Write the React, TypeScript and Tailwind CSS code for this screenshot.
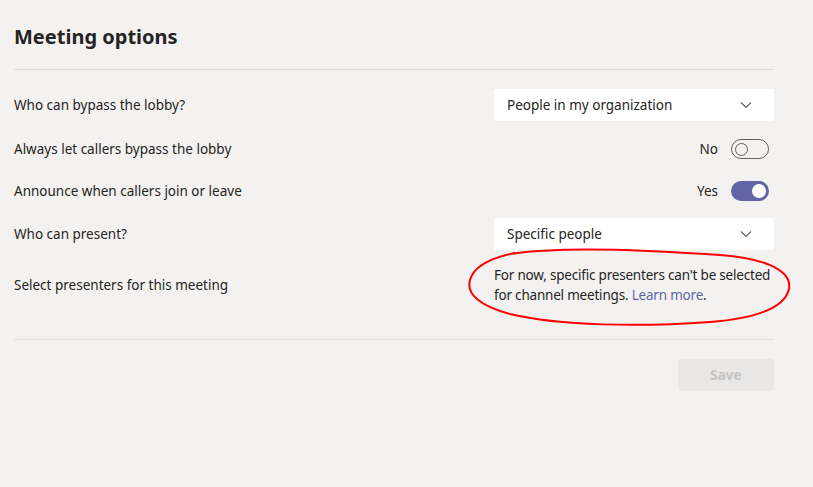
import React from "react";

const font = { fontFamily: '"Noto Sans", "Open Sans", sans-serif' };

function Chevron() {
  return (
    <svg width="12" height="8" viewBox="0 0 12 8" fill="none">
      <path d="M1 1.5 L6 6.5 L11 1.5" stroke="#605e5c" strokeWidth="1.1" />
    </svg>
  );
}

function Dropdown({ value }: { value: string }) {
  return (
    <div className="flex h-8 w-[280px] items-center justify-between rounded-[3px] bg-white pl-[13px] pr-[22px] text-[13.5px] text-[#252423]">
      <span>{value}</span>
      <Chevron />
    </div>
  );
}

function Toggle({ on, label }: { on: boolean; label: string }) {
  return (
    <div className="flex items-center gap-[13px] pr-[5px] text-[13.5px] text-[#252423]">
      <span>{label}</span>
      {on ? (
        <div className="flex h-5 w-[38px] items-center justify-end rounded-full bg-[#6264a7] pr-[3px]">
          <div className="h-[14px] w-[14px] rounded-full bg-white" />
        </div>
      ) : (
        <div className="flex h-5 w-[38px] items-center rounded-full border border-[#605e5c] pl-[3px]">
          <div className="h-[13px] w-[13px] rounded-full border border-[#605e5c]" />
        </div>
      )}
    </div>
  );
}

export default function App() {
  return (
    <div className="relative h-[487px] w-[813px] overflow-hidden bg-[#f3f2f1]" style={font}>
      <div className="w-[760px] pl-[14px] pt-[23px] text-[#252423]" style={{ boxSizing: "content-box" }}>
        <h1 className="text-[20px] font-bold leading-[28px] text-[#252423]">Meeting options</h1>
        <div className="mt-[18px] h-px bg-[#e1dfdd]" />
        <div className="flex h-8 mt-[19px] items-center justify-between">
          <span className="text-[13.5px]">Who can bypass the lobby?</span>
          <Dropdown value="People in my organization" />
        </div>
        <div className="mt-[18px] flex h-5 items-center justify-between">
          <span className="text-[13.5px]">Always let callers bypass the lobby</span>
          <Toggle on={false} label="No" />
        </div>
        <div className="mt-[22px] flex h-5 items-center justify-between">
          <span className="text-[13.5px]">Announce when callers join or leave</span>
          <Toggle on={true} label="Yes" />
        </div>
        <div className="mt-[17px] flex h-8 items-center justify-between">
          <span className="text-[13.5px]">Who can present?</span>
          <Dropdown value="Specific people" />
        </div>
        <div className="mt-[15px] flex items-center justify-between">
          <span className="text-[13.5px]">Select presenters for this meeting</span>
          <div className="w-[280px] whitespace-nowrap text-[13.5px] leading-[20px] tracking-[-0.2px] text-[#252423]">
            <div>For now, specific presenters can't be selected</div>
            <div>
              for channel meetings. <span className="text-[#6264a7]">Learn more</span>.
            </div>
          </div>
        </div>
        <div className="mt-[34px] h-px bg-[#e1dfdd]" />
        <div className="mt-[19px] flex justify-end">
          <button className="h-8 w-[96px] rounded-[3px] bg-[#e9e8e7] text-[13.5px] font-bold text-[#c4c3c2]">
            Save
          </button>
        </div>
      </div>
      <svg
        className="pointer-events-none absolute left-0 top-0"
        width="813"
        height="487"
        viewBox="0 0 813 487"
      >
        <path
          d="M510 254 C 560 246, 650 250, 720 255 C 770 259, 792 272, 789 289 C 785 307, 760 318, 710 322 C 640 327, 560 326, 510 314 C 480 306, 466 294, 470 280 C 474 266, 490 258, 515 253"
          fill="none"
          stroke="#ff0000"
          strokeWidth="2"
        />
      </svg>
    </div>
  );
}
